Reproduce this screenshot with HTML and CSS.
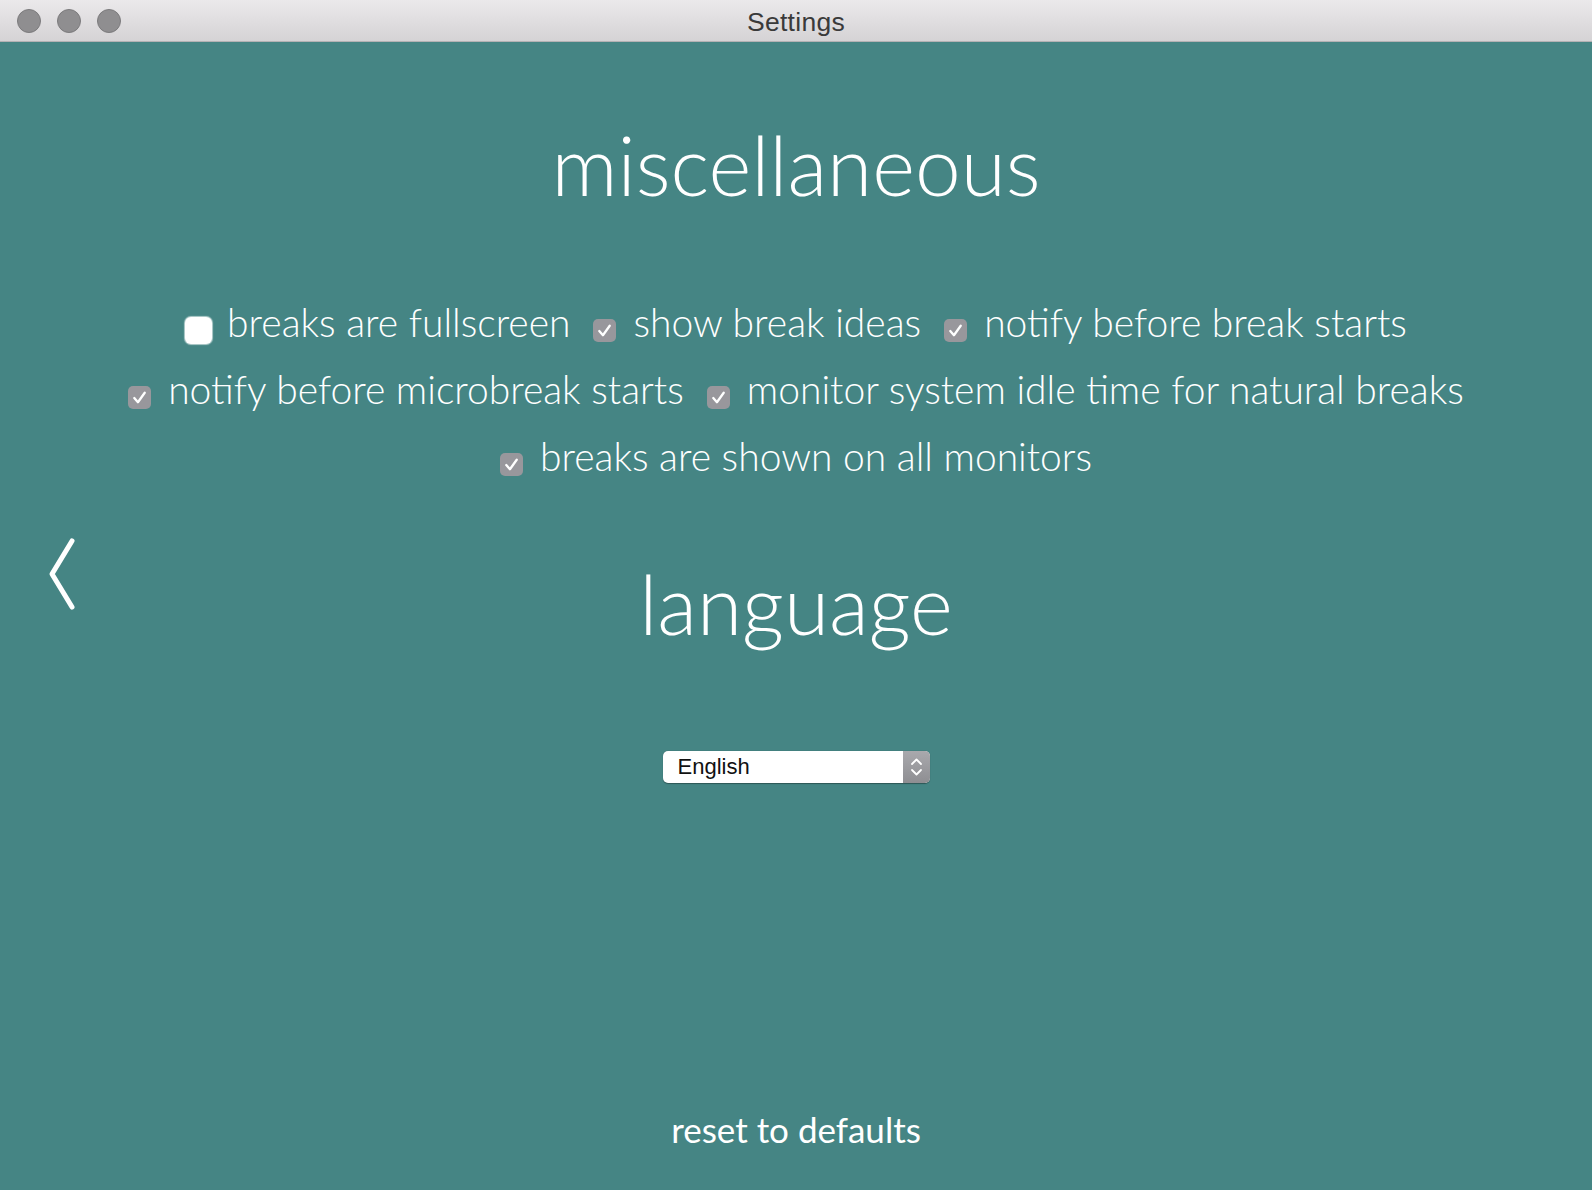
FILE: index.html
```html
<!DOCTYPE html>
<html>
<head>
<meta charset="utf-8">
<title>Settings</title>
<link rel="stylesheet" href="styles.css">
</head>
<body>
<div class="window">
  <div class="titlebar">
    <div class="lights">
      <span class="light"></span>
      <span class="light"></span>
      <span class="light"></span>
    </div>
    <div class="title">Settings</div>
  </div>
  <div class="content">
    <a class="back" href="#">
      <svg width="30" height="74" viewBox="0 0 30 74"><polyline points="25,4 5,37 25,70" fill="none" stroke="#fff" stroke-width="5" stroke-linecap="round" stroke-linejoin="round"/></svg>
    </a>
    <h1 class="heading heading-misc">miscellaneous</h1>
    <div class="options">
      <div class="row">
        <label class="opt"><span class="box box-off"></span><span class="lbl">breaks are fullscreen</span></label>
        <label class="opt"><span class="box box-on"><svg viewBox="0 0 22 22"><polyline points="6,11.5 9.5,15.5 16,6.5" fill="none" stroke="#fff" stroke-width="2.2" stroke-linecap="round" stroke-linejoin="round"/></svg></span><span class="lbl">show break ideas</span></label>
        <label class="opt"><span class="box box-on"><svg viewBox="0 0 22 22"><polyline points="6,11.5 9.5,15.5 16,6.5" fill="none" stroke="#fff" stroke-width="2.2" stroke-linecap="round" stroke-linejoin="round"/></svg></span><span class="lbl">notify before break starts</span></label>
      </div>
      <div class="row">
        <label class="opt"><span class="box box-on"><svg viewBox="0 0 22 22"><polyline points="6,11.5 9.5,15.5 16,6.5" fill="none" stroke="#fff" stroke-width="2.2" stroke-linecap="round" stroke-linejoin="round"/></svg></span><span class="lbl">notify before microbreak starts</span></label>
        <label class="opt"><span class="box box-on"><svg viewBox="0 0 22 22"><polyline points="6,11.5 9.5,15.5 16,6.5" fill="none" stroke="#fff" stroke-width="2.2" stroke-linecap="round" stroke-linejoin="round"/></svg></span><span class="lbl">monitor system idle time for natural breaks</span></label>
      </div>
      <div class="row">
        <label class="opt"><span class="box box-on"><svg viewBox="0 0 22 22"><polyline points="6,11.5 9.5,15.5 16,6.5" fill="none" stroke="#fff" stroke-width="2.2" stroke-linecap="round" stroke-linejoin="round"/></svg></span><span class="lbl">breaks are shown on all monitors</span></label>
      </div>
    </div>
    <h1 class="heading heading-lang">language</h1>
    <div class="select">
      <span class="select-text">English</span>
      <span class="select-arrows">
        <svg width="27" height="32" viewBox="0 0 27 32"><polyline points="9,13 13.5,8.5 18,13" fill="none" stroke="#fff" stroke-width="1.8" stroke-linecap="round" stroke-linejoin="round"/><polyline points="9,19 13.5,23.5 18,19" fill="none" stroke="#fff" stroke-width="1.8" stroke-linecap="round" stroke-linejoin="round"/></svg>
      </span>
    </div>
    <div class="reset">reset to defaults</div>
  </div>
</div>
</body>
</html>
```

FILE: styles.css
```css
html, body {
  margin: 0;
  padding: 0;
  height: 100%;
  overflow: hidden;
}

body {
  font-family: Lato, "Open Sans", sans-serif;
  background: #458584;
}

.window {
  display: flex;
  flex-direction: column;
  height: 1190px;
}

.titlebar {
  position: relative;
  height: 41px;
  flex: 0 0 41px;
  background: linear-gradient(#ebe9eb, #d5d3d5);
  border-bottom: 1px solid #b4b2b4;
  display: flex;
  align-items: center;
  justify-content: center;
}

.lights {
  position: absolute;
  left: 17px;
  top: 9px;
  display: flex;
  gap: 16px;
}

.light {
  width: 24px;
  height: 24px;
  border-radius: 50%;
  background: #8f8e90;
  border: 1px solid #7c7b7d;
  box-sizing: border-box;
  display: block;
}

.title {
  font-family: "Liberation Sans", Arial, sans-serif;
  font-size: 26.5px;
  color: #3a3a3a;
  letter-spacing: 0.3px;
  padding-top: 3px;
}

.content {
  position: relative;
  flex: 1;
  display: flex;
  flex-direction: column;
  align-items: center;
  color: #fff;
}

.back {
  position: absolute;
  left: 47px;
  top: 495px;
  display: block;
  line-height: 0;
}

.heading {
  margin: 0;
  font-family: Lato, sans-serif;
  font-weight: 300;
  font-size: 82px;
  line-height: 98px;
  color: #fff;
}

.heading-misc {
  margin-top: 73px;
}

.options {
  margin-top: 76px;
  display: flex;
  flex-direction: column;
  align-items: center;
}

.row {
  display: flex;
  justify-content: center;
  gap: 23px;
  height: 67px;
  line-height: 67px;
  white-space: nowrap;
}

.opt {
  font-weight: 300;
  font-size: 39px;
}

.box {
  display: inline-block;
  box-sizing: border-box;
  margin-right: 17px;
}

.box-on {
  width: 23px;
  height: 23px;
  border-radius: 5px;
  background: #98979c;
  vertical-align: -5px;
}

.box-on svg {
  display: block;
  width: 23px;
  height: 23px;
}

.box-off {
  width: 27px;
  height: 27px;
  border-radius: 6px;
  background: #fff;
  box-shadow: 0 0 1px 1px rgba(255,255,255,0.6);
  vertical-align: -7px;
  margin-right: 15px;
}

.heading-lang {
  margin-top: 64px;
}

.select {
  margin-top: 99px;
  width: 267px;
  height: 32px;
  box-sizing: border-box;
  display: flex;
  background: #fff;
  border-radius: 5px;
  overflow: hidden;
  box-shadow: 0 0.5px 1px rgba(0,0,0,0.35);
}

.select-text {
  flex: 1;
  font-family: "Liberation Sans", Arial, sans-serif;
  font-size: 22px;
  line-height: 32px;
  color: #111;
  padding-left: 15px;
}

.select-arrows {
  width: 27px;
  flex: 0 0 27px;
  background: linear-gradient(#a9a9ad, #8e8e92);
  line-height: 0;
}

.reset {
  margin-top: auto;
  margin-bottom: 40px;
  font-family: Lato, sans-serif;
  font-weight: 400;
  font-size: 35px;
  line-height: 42px;
  color: #fff;
}
```
